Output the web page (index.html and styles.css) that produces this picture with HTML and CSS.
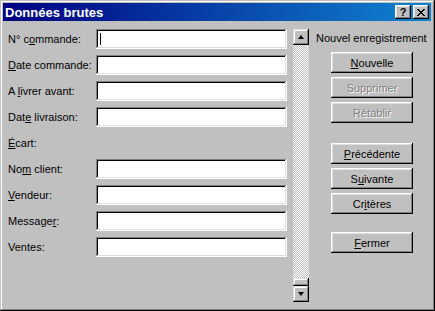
FILE: index.html
```html
<!DOCTYPE html>
<html lang="fr">
  <head>
    <meta charset="utf-8">
    <title>Données brutes</title>
    <link rel="stylesheet" href="styles.css">
  </head>
  <body>

  <div class="window">
    <div class="titlebar">
      <span class="title">Données brutes</span>
      <div class="caption-btns">
        <span class="cap-btn help">?</span>
        <span class="cap-btn close">
          <svg width="8" height="7" viewBox="0 0 8 7"><path d="M0 0h2v1h1v1h2v-1h1v-1h2v1h-1v1h-1v1h-1v1h1v1h1v1h1v1h-2v-1h-1v-1h-2v1h-1v1h-2v-1h1v-1h1v-1h1v-1h-1v-1h-1v-1h-1z" fill="#000"/></svg>
        </span>
      </div>
    </div>

    <div class="content">
      <div class="fields">
        <div class="row"><label>N° c<u>o</u>mmande:</label><div class="field"><span class="caret"></span></div></div>
        <div class="row"><label><u>D</u>ate commande:</label><div class="field"></div></div>
        <div class="row"><label>A <u>l</u>ivrer avant:</label><div class="field"></div></div>
        <div class="row"><label>Dat<u>e</u> livraison:</label><div class="field"></div></div>
        <div class="row"><label><u>É</u>cart:</label></div>
        <div class="row"><label>No<u>m</u> client:</label><div class="field"></div></div>
        <div class="row"><label><u>V</u>endeur:</label><div class="field"></div></div>
        <div class="row"><label>Message<u>r</u>:</label><div class="field"></div></div>
        <div class="row"><label>Ventes:</label><div class="field"></div></div>
      </div>

      <div class="scrollbar">
        <div class="arrow"><span class="tri up"></span></div>
        <div class="track"></div>
        <div class="thumb"></div>
        <div class="arrow"><span class="tri down"></span></div>
      </div>

      <div class="side">
        <div class="status">Nouvel enregistrement</div>
        <div class="btns">
          <button class="btn"><u>N</u>ouvelle</button>
          <button class="btn disabled">Supprimer</button>
          <button class="btn disabled">Rétablir</button>
          <button class="btn gap-big"><u>P</u>récédente</button>
          <button class="btn">S<u>u</u>ivante</button>
          <button class="btn">Cr<u>i</u>tères</button>
          <button class="btn gap-close"><u>F</u>ermer</button>
        </div>
      </div>
    </div>
  </div>

  </body>
</html>
```

FILE: styles.css
```css
      html, body {
        margin: 0;
        padding: 0;
        background: #c0c0c0;
      }
      body {
        font-family: "Liberation Sans", Arial, sans-serif;
        font-size: 11px;
        color: #000000;
      }
      .window {
        box-sizing: border-box;
        width: 435px;
        height: 311px;
        padding: 3px;
        background: #c0c0c0;
        box-shadow: inset -1px -1px #000000, inset 1px 1px #c0c0c0,
                    inset -2px -2px #808080, inset 2px 2px #ffffff;
      }
      .titlebar {
        height: 18px;
        margin-right: 1px;
        display: flex;
        align-items: center;
        justify-content: space-between;
        background: linear-gradient(to right, #000080, #1084d0);
      }
      .title {
        color: #ffffff;
        font-weight: bold;
        font-size: 13px;
        padding-left: 2px;
      }
      .caption-btns {
        display: flex;
        gap: 2px;
        padding-right: 2px;
      }
      .cap-btn {
        box-sizing: border-box;
        width: 16px;
        height: 14px;
        display: flex;
        align-items: center;
        justify-content: center;
        background: #c0c0c0;
        box-shadow: inset -1px -1px #000000, inset 1px 1px #ffffff,
                    inset -2px -2px #808080, inset 2px 2px #dfdfdf;
      }
      .help {
        font-weight: bold;
        font-size: 11px;
        line-height: 14px;
      }
      .close svg {
        display: block;
        margin-top: 1px;
      }
      .content {
        display: flex;
        padding: 8px 0 0 5px;
      }
      .fields {
        display: flex;
        flex-direction: column;
        gap: 6px;
        width: 279px;
      }
      .row {
        display: flex;
        align-items: center;
        height: 20px;
      }
      .row label {
        width: 88px;
      }
      .field {
        box-sizing: border-box;
        width: 191px;
        height: 20px;
        padding: 4px 0 0 4px;
        background: #ffffff;
        box-shadow: inset -1px -1px #ffffff, inset 1px 1px #808080,
                    inset -2px -2px #dfdfdf, inset 2px 2px #000000;
      }
      .caret {
        display: block;
        width: 1px;
        height: 12px;
        background: #000000;
      }
      .scrollbar {
        display: flex;
        flex-direction: column;
        width: 16px;
        height: 273px;
        margin-left: 6px;
      }
      .arrow, .thumb {
        box-sizing: border-box;
        width: 16px;
        height: 16px;
        display: flex;
        align-items: center;
        justify-content: center;
        background: #c0c0c0;
        box-shadow: inset -1px -1px #000000, inset 1px 1px #dfdfdf,
                    inset -2px -2px #808080, inset 2px 2px #ffffff;
      }
      .thumb {
        height: 8px;
      }
      .track {
        flex: 1;
        background-color: #ffffff;
        background-image: repeating-conic-gradient(#c0c0c0 0 25%, #ffffff 0 50%);
        background-size: 2px 2px;
      }
      .tri {
        width: 0;
        height: 0;
        border-left: 3.5px solid transparent;
        border-right: 3.5px solid transparent;
      }
      .tri.up {
        border-bottom: 4px solid #000000;
      }
      .tri.down {
        border-top: 4px solid #000000;
      }
      .side {
        display: flex;
        flex-direction: column;
      }
      .status {
        height: 18px;
        line-height: 18px;
        padding-left: 7px;
        white-space: nowrap;
      }
      .btns {
        display: flex;
        flex-direction: column;
        gap: 4px;
        margin: 5px 0 0 22px;
      }
      .btn {
        box-sizing: border-box;
        width: 82px;
        height: 21px;
        padding: 0;
        border: none;
        font: inherit;
        color: #000000;
        background: #c0c0c0;
        box-shadow: inset -1px -1px #000000, inset 1px 1px #ffffff,
                    inset -2px -2px #808080, inset 2px 2px #dfdfdf;
      }
      .btn.disabled {
        color: #808080;
        text-shadow: 1px 1px #ffffff;
      }
      .gap-big {
        margin-top: 16px;
      }
      .gap-close {
        margin-top: 14px;
      }
```
